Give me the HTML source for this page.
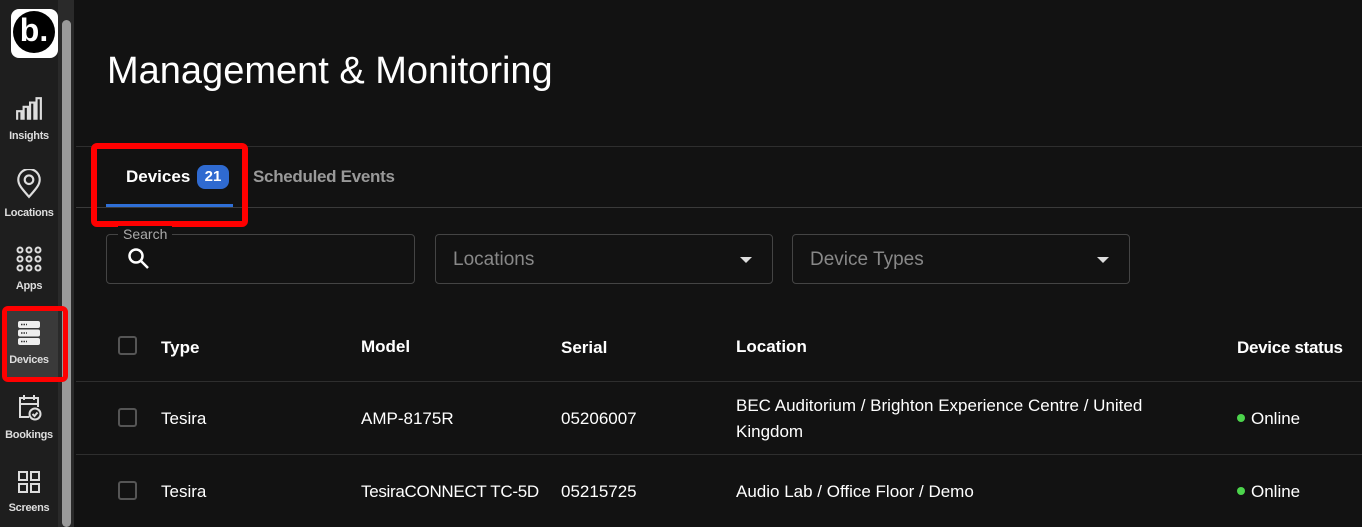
<!DOCTYPE html>
<html><head><style>
*{margin:0;padding:0;box-sizing:border-box}
body{width:1362px;height:527px;background:#121212;font-family:"Liberation Sans",sans-serif;color:#fff;position:relative;overflow:hidden}
.sb{position:absolute;left:0;top:0;width:58px;height:527px;background:#1e1e1e}
.scr{position:absolute;left:58px;top:0;width:16px;height:527px;background:#2a2a2a}
.thumb{position:absolute;left:62px;top:20px;width:9px;height:507px;background:#9a9a9a;border-radius:5px}
.nav{position:absolute;left:0;width:58px;text-align:center;font-size:11px;font-weight:bold;color:#ddd;letter-spacing:-0.3px}
.nav svg{display:block;margin:0 auto 8px}
.abs{position:absolute}
.hl{border-top:1px solid #2e2e2e;position:absolute;left:76px;right:0}
.th{position:absolute;font-size:17px;font-weight:bold}
.td{position:absolute;font-size:17px}
.cb{position:absolute;left:118px;width:19px;height:19px;border:2px solid #555;border-radius:3px}
.sel{position:absolute;border:1px solid #444;border-radius:4px;height:50px;top:234px}
.sel span{position:absolute;left:17px;top:14px;font-size:19px;color:#888}
.arr{position:absolute;right:20px;top:22px;border:6px solid transparent;border-top:6px solid #ddd;border-bottom:0;width:0;height:0}
</style></head><body>
<div class="sb"></div><div class="scr"></div><div class="thumb"></div>
<div class="abs" style="left:11px;top:9px;width:47px;height:49px;background:#fff;border-radius:8px"></div>
<div class="abs" style="left:13px;top:11px;width:42px;height:42px;background:#000;border-radius:50%;color:#fff;font-weight:bold;font-size:32px;text-align:center;line-height:38px">b.</div>
<div class="nav" style="top:96px"><svg width="28" height="26" viewBox="0 0 26 24" fill="none" stroke="#ddd" stroke-width="2"><path d="M2 22V14h4v8M8 22V10h4v12M14 22V6h4v16M20 22V2h4v20"/></svg>Insights</div>
<div class="nav" style="top:169px"><svg width="26" height="30" viewBox="0 0 24 28" fill="none" stroke="#ddd" stroke-width="2"><path d="M12 26C6 19 2 15 2 10a10 10 0 0 1 20 0c0 5-4 9-10 16z"/><circle cx="12" cy="10" r="4"/></svg>Locations</div>
<div class="nav" style="top:246px"><svg width="26" height="26" viewBox="0 0 26 26" fill="none" stroke="#ddd" stroke-width="2"><circle cx="4" cy="4" r="2.5"/><circle cx="13" cy="4" r="2.5"/><circle cx="22" cy="4" r="2.5"/><circle cx="4" cy="13" r="2.5"/><circle cx="13" cy="13" r="2.5"/><circle cx="22" cy="13" r="2.5"/><circle cx="4" cy="22" r="2.5"/><circle cx="13" cy="22" r="2.5"/><circle cx="22" cy="22" r="2.5"/></svg>Apps</div>
<div class="abs" style="left:2px;top:306px;width:66px;height:76px;border:5px solid #f00;border-radius:6px"></div>
<div class="abs" style="left:7px;top:311px;width:51px;height:66px;background:#3a3a3a"></div>
<div class="nav" style="top:320px"><svg width="24" height="26" viewBox="0 0 24 26"><rect x="1" y="1" width="22" height="7" rx="2" fill="#eee"/><rect x="1" y="9.5" width="22" height="7" rx="2" fill="#eee"/><rect x="1" y="18" width="22" height="7" rx="2" fill="#eee"/><path d="M4 4.5h6M4 13h6M4 21.5h6" stroke="#333" stroke-width="1.5" stroke-dasharray="1.5 1"/></svg>Devices</div>
<div class="nav" style="top:393px"><svg width="26" height="28" viewBox="0 0 26 28" fill="none" stroke="#ddd" stroke-width="2"><path d="M13 24H4V5h18v9M4 11h18M8 2v5M18 2v5"/><circle cx="19" cy="21" r="5.5"/><path d="M16.5 21l2 2 3-3.5"/></svg>Bookings</div>
<div class="nav" style="top:470px"><svg width="24" height="24" viewBox="0 0 24 24" fill="none" stroke="#ddd" stroke-width="2"><rect x="2" y="2" width="8" height="8"/><rect x="14" y="2" width="8" height="8"/><rect x="2" y="14" width="8" height="8"/><rect x="14" y="14" width="8" height="8"/></svg>Screens</div>

<div class="abs" style="left:107px;top:50px;font-size:38px;">Management &amp; Monitoring</div>
<div class="hl" style="top:146px"></div>
<div class="hl" style="top:207px;border-color:#3a3a3a"></div>
<div class="abs" style="left:106px;top:204px;width:127px;height:3px;background:#2f6fd6"></div>
<div class="abs" style="left:126px;top:167px;font-size:17px;font-weight:bold">Devices</div>
<div class="abs" style="left:197px;top:165px;width:32px;height:24px;background:#2f6ad0;border-radius:8px;font-size:15px;font-weight:bold;text-align:center;line-height:24px">21</div>
<div class="abs" style="left:253px;top:167px;font-size:17px;font-weight:bold;color:#999;letter-spacing:-0.3px">Scheduled Events</div>
<div class="abs" style="left:91px;top:143px;width:157px;height:84px;border:6px solid #f00;border-radius:6px"></div>

<div class="sel" style="left:106px;width:309px"></div>
<div class="abs" style="left:118px;top:226px;background:#121212;padding:0 5px;font-size:14px;color:#aaa">Search</div>
<svg class="abs" style="left:127px;top:247px" width="24" height="24" viewBox="0 0 24 24" fill="none" stroke="#fff" stroke-width="2.5"><circle cx="9" cy="9" r="6.5"/><path d="M14 14l7 7"/></svg>
<div class="sel" style="left:435px;width:338px"><span>Locations</span><div class="arr"></div></div>
<div class="sel" style="left:792px;width:338px"><span>Device Types</span><div class="arr"></div></div>

<div class="cb" style="top:336px"></div>
<div class="th" style="left:161px;top:338px">Type</div>
<div class="th" style="left:361px;top:337px">Model</div>
<div class="th" style="left:561px;top:338px">Serial</div>
<div class="th" style="left:736px;top:337px">Location</div>
<div class="th" style="left:1237px;top:338px;letter-spacing:-0.3px">Device status</div>
<div class="hl" style="top:381px"></div>
<div class="cb" style="top:408px"></div>
<div class="td" style="left:161px;top:409px">Tesira</div>
<div class="td" style="left:361px;top:409px">AMP-8175R</div>
<div class="td" style="left:561px;top:409px">05206007</div>
<div class="td" style="left:736px;top:393px;line-height:26px;width:440px">BEC Auditorium / Brighton Experience Centre / United Kingdom</div>
<div class="td" style="left:1237px;top:409px"><span style="display:inline-block;width:8px;height:8px;border-radius:50%;background:#4cd44c;margin-right:6px;vertical-align:2px"></span>Online</div>
<div class="hl" style="top:454px"></div>
<div class="cb" style="top:481px"></div>
<div class="td" style="left:161px;top:482px">Tesira</div>
<div class="td" style="left:361px;top:482px;letter-spacing:-0.3px">TesiraCONNECT TC-5D</div>
<div class="td" style="left:561px;top:482px">05215725</div>
<div class="td" style="left:736px;top:482px">Audio Lab / Office Floor / Demo</div>
<div class="td" style="left:1237px;top:482px"><span style="display:inline-block;width:8px;height:8px;border-radius:50%;background:#4cd44c;margin-right:6px;vertical-align:2px"></span>Online</div>
</body></html>
